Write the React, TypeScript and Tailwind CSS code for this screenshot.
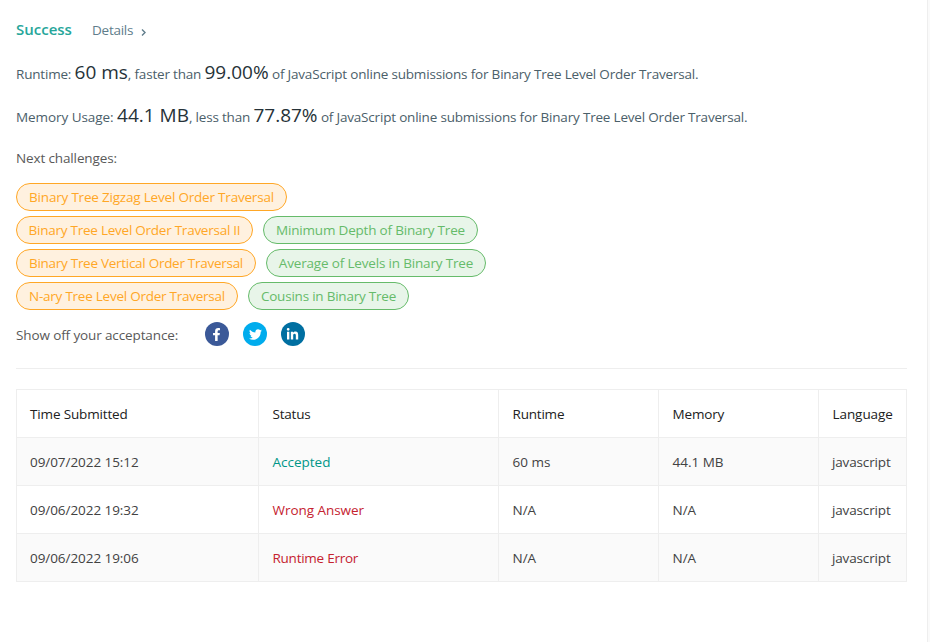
import React from "react";
import { FaFacebookF, FaTwitter, FaLinkedinIn } from "react-icons/fa";

const orange = "border-[#ffa726] bg-[#fff1df] text-[#ffa726]";
const green = "border-[#66bb6a] bg-[#e8f5e9] text-[#66bb6a]";

const challenges = [
  [{ name: "Binary Tree Zigzag Level Order Traversal", tone: orange, width: "w-[271px] tracking-[-0.2px]" }],
  [
    { name: "Binary Tree Level Order Traversal II", tone: orange, width: "w-[237px] tracking-[-0.25px]" },
    { name: "Minimum Depth of Binary Tree", tone: green, width: "w-[215px] tracking-[-0.19px]" },
  ],
  [
    { name: "Binary Tree Vertical Order Traversal", tone: orange, width: "w-[240px] tracking-[-0.28px]" },
    { name: "Average of Levels in Binary Tree", tone: green, width: "w-[220px] tracking-[-0.17px]" },
  ],
  [
    { name: "N-ary Tree Level Order Traversal", tone: orange, width: "w-[222px] tracking-[-0.25px]" },
    { name: "Cousins in Binary Tree", tone: green, width: "w-[161px] tracking-[-0.22px]" },
  ],
];

const rows = [
  { time: "09/07/2022 15:12", status: "Accepted", color: "text-[#009688]", runtime: "60 ms", memory: "44.1 MB" },
  { time: "09/06/2022 19:32", status: "Wrong Answer", color: "text-[#c5222f] tracking-[-0.05px]", runtime: "N/A", memory: "N/A" },
  { time: "09/06/2022 19:06", status: "Runtime Error", color: "text-[#c5222f] tracking-[-0.25px]", runtime: "N/A", memory: "N/A" },
];

const headers = [
  { name: "Time Submitted", spacing: "pl-[13px] tracking-[-0.15px]" },
  { name: "Status", spacing: "pl-[13.5px] tracking-[-0.2px]" },
  { name: "Runtime", spacing: "pl-[13.5px] tracking-[-0.2px]" },
  { name: "Memory", spacing: "pl-[13.5px] tracking-[-0.15px]" },
  { name: "Language", spacing: "pl-[13.5px] tracking-[-0.07px]" },
];

const grid = "grid grid-cols-[242px_240px_160px_160px_88px] h-12 border-b border-[#eee]";
const cell = "flex items-center border-r border-[#eee] pt-px";
const big = "text-[19px] tracking-normal text-[#263238]";

export default function App() {
  return (
    <div className="flex h-[642px] w-[930px] overflow-hidden bg-[#fafafa] font-['Open_Sans','Noto_Sans',sans-serif] text-[13.5px] whitespace-nowrap text-[#4b606a]">
      <main className="w-[928px] shrink-0 border-r border-[#eee] bg-white pl-4 pr-5">
        <div className="flex h-[59px] items-center">
          <h1 className="w-[76px] text-[15px] font-semibold text-[#26a69a]">Success</h1>
          <a className="flex items-center pt-px tracking-[-0.25px] text-[#607d8b]">
            Details
            <svg className="ml-2 mt-1 h-[7px] w-[5px]" viewBox="0 0 5 7" fill="none" stroke="#607d8b" strokeWidth="1.4">
              <path d="M1 .5 4 3.5 1 6.5" />
            </svg>
          </a>
        </div>
        <p className="h-[43px] leading-[26px] tracking-[-0.19px]">
          Runtime: <span className={big}>60 ms</span>, faster than{" "}
          <span className={big}>99.00%</span> of JavaScript online submissions for Binary Tree Level Order Traversal.
        </p>
        <p className="h-[43px] leading-[26px] tracking-[-0.19px]">
          <span className="tracking-[-0.06px]">Memory Usage: </span><span className={big}>44.1 MB</span>, less than{" "}
          <span className={big}>77.87%</span> of JavaScript online submissions for Binary Tree Level Order Traversal.
        </p>
        <p className="h-[38px] leading-[26px] tracking-[-0.13px] text-[#595959]">Next challenges:</p>
        <div className="flex flex-col gap-[5px]">
          {challenges.map((line, i) => (
            <div key={i} className="flex gap-[10px]">
              {line.map((c) => (
                <a key={c.name} className={`flex h-7 items-center justify-center rounded-full border ${c.width} ${c.tone}`}>{c.name}</a>
              ))}
            </div>
          ))}
        </div>
        <div className="flex h-[59px] items-start border-b border-[#eee] pt-3 text-[#595959]">
          <span className="w-[189px] leading-[26px] tracking-[-0.12px]">Show off your acceptance:</span>
          <div className="flex gap-[14px] text-white">
            <span className="flex size-6 items-center justify-center rounded-full bg-[#3b5998] pr-px"><FaFacebookF size={13} /></span>
            <span className="flex size-6 items-center justify-center rounded-full bg-[#00aced]"><FaTwitter size={13} /></span>
            <span className="flex size-6 items-center justify-center rounded-full bg-[#006fa1] pr-px"><FaLinkedinIn size={13} /></span>
          </div>
        </div>
        <div className="mt-5 w-[891px] border-l border-t border-[#eee] text-[#424242]">
          <div className={`${grid} text-[#212121]`}>
            {headers.map((h) => (
              <div key={h.name} className={`${cell} ${h.spacing}`}>{h.name}</div>
            ))}
          </div>
          {rows.map((r, i) => (
            <div key={r.time} className={`${grid} ${i % 2 === 0 ? "bg-[#fafafa]" : "bg-white"}`}>
              <div className={`${cell} pl-[13px] tracking-[-0.06px]`}>{r.time}</div>
              <div className={`${cell} pl-[13.5px] ${r.color}`}>{r.status}</div>
              <div className={`${cell} pl-[13.5px]`}>{r.runtime}</div>
              <div className={`${cell} pl-[13.5px]`}>{r.memory}</div>
              <div className={`${cell} pl-[13px] tracking-[-0.15px]`}>javascript</div>
            </div>
          ))}
        </div>
      </main>
    </div>
  );
}
